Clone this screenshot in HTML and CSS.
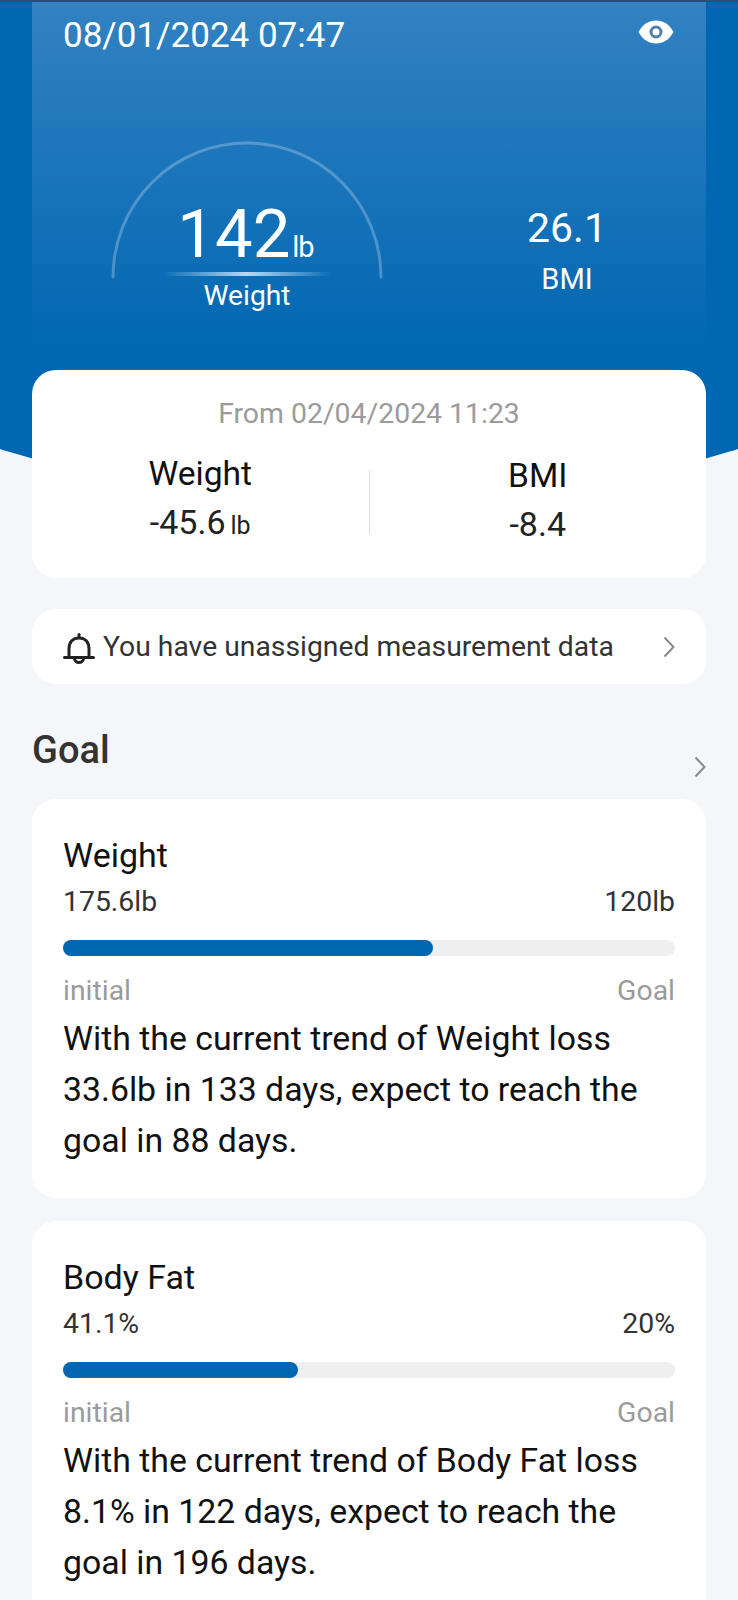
FILE: index.html
```html
<!DOCTYPE html>
<html lang="en">
<head>
  <meta charset="UTF-8">
  <meta name="viewport" content="width=device-width, initial-scale=1.0">
  <title>Weight</title>
  <link rel="stylesheet" href="styles.css">
</head>
<body>
  <div class="page">
    <section class="hero">
      <div class="hero-top">
        <span class="hero-date">08/01/2024 07:47</span>
        <svg class="eye" viewBox="0 0 36 24" width="36" height="24" aria-hidden="true">
          <path d="M0.5 12C5 4 11 0.5 18 0.5S31 4 35.500 12C31 20 25 23.500 18 23.500S5 20 0.500 12Z" fill="#fff"/>
          <circle cx="18" cy="12" r="5" fill="none" stroke="#4f7fae" stroke-width="3"/>
        </svg>
      </div>
      <div class="hero-metrics">
        <div class="gauge">
          <svg class="gauge-arc" viewBox="0 0 272 140" width="272" height="140" aria-hidden="true">
            <path d="M2 138A134 134 0 0 1 270 138" fill="none" stroke="#fff" stroke-opacity="0.25" stroke-width="3" stroke-linecap="round"/>
          </svg>
          <div class="gauge-value">142<span class="gauge-unit">lb</span></div>
          <div class="gauge-line"></div>
          <div class="gauge-label">Weight</div>
        </div>
        <div class="bmi">
          <div class="bmi-value">26.1</div>
          <div class="bmi-label">BMI</div>
        </div>
      </div>
    </section>

    <section class="card summary">
      <p class="summary-from">From 02/04/2024 11:23</p>
      <div class="summary-row">
        <div class="summary-col">
          <div class="summary-title">Weight</div>
          <div class="summary-value">-45.6<span class="summary-unit">lb</span></div>
        </div>
        <div class="summary-divider"></div>
        <div class="summary-col">
          <div class="summary-title">BMI</div>
          <div class="summary-value">-8.4</div>
        </div>
      </div>
    </section>

    <section class="card notice">
      <svg class="bell" viewBox="0 0 32 32" width="32" height="32" aria-hidden="true">
        <path d="M16 2.500V6M6 25V17C6 10 10 6 16 6S26 10 26 17V25M1.500 25.500H30.500M11.500 26C11.500 32 20.500 32 20.500 26" fill="none" stroke="#222" stroke-width="3" stroke-linecap="round"/>
      </svg>
      <span class="notice-text">You have unassigned measurement data</span>
      <svg class="chevron" viewBox="0 0 12 22" width="12" height="22" aria-hidden="true">
        <path d="M1.500 1.500L10.500 11L1.500 20.500" fill="none" stroke="#8a8a8a" stroke-width="2"/>
      </svg>
    </section>

    <div class="goal-head">
      <h2 class="goal-title">Goal</h2>
      <svg class="chevron goal-chevron" viewBox="0 0 12 22" width="12" height="22" aria-hidden="true">
        <path d="M1.500 1.500L10.500 11L1.500 20.500" fill="none" stroke="#8a8a8a" stroke-width="2"/>
      </svg>
    </div>

    <section class="card goal">
      <h3 class="goal-name">Weight</h3>
      <div class="goal-ends"><span>175.6lb</span><span>120lb</span></div>
      <div class="bar"><div class="bar-fill" style="width: 60.4%"></div></div>
      <div class="goal-ends goal-caption"><span>initial</span><span>Goal</span></div>
      <p class="goal-text">With the current trend of Weight loss<br>33.6lb in 133 days, expect to reach the<br>goal in 88 days.</p>
    </section>

    <section class="card goal">
      <h3 class="goal-name">Body Fat</h3>
      <div class="goal-ends"><span>41.1%</span><span>20%</span></div>
      <div class="bar"><div class="bar-fill" style="width: 38.4%"></div></div>
      <div class="goal-ends goal-caption"><span>initial</span><span>Goal</span></div>
      <p class="goal-text">With the current trend of Body Fat loss<br>8.1% in 122 days, expect to reach the<br>goal in 196 days.</p>
    </section>
  </div>
</body>
</html>
```

FILE: styles.css
```css
html, body {
  margin: 0;
  padding: 0;
  height: 1600px;
  overflow: hidden;
  background-color: #f4f6f9;
  font-family: Roboto, "Liberation Sans", sans-serif;
}
.page {
  position: relative;
  height: 1600px;
  padding: 0 32px;
  box-sizing: border-box;
  overflow: hidden;
  border-top: 2px solid #2b4c7c;
}
/* blue backdrop with the wide curved bottom */
.page::before {
  content: "";
  position: absolute;
  top: 0;
  left: 0;
  right: 0;
  height: 503px;
  background-color: #0167b2;
  clip-path: circle(1246px at 369px -743px);
}
.hero {
  position: relative;
  height: 368px;
  border-radius: 0 0 24px 24px;
  background: linear-gradient(#3382c2, #0167b2 94%);
  color: #fff;
}
.hero-top {
  display: flex;
  justify-content: space-between;
  align-items: center;
  padding: 12px 32px 0 31px;
}
.hero-date {
  font-size: 35px;
  line-height: 44px;
}
.eye {
  margin-top: -9px;
}
.hero-metrics {
  display: flex;
  padding: 81px 0 0 79px;
}
.gauge {
  position: relative;
  width: 272px;
  height: 180px;
  text-align: center;
}
.gauge-arc {
  position: absolute;
  top: 0;
  left: 0;
}
.gauge-value {
  padding-top: 71px;
  padding-right: 3px;
  font-size: 67px;
  line-height: 49px;
}
.gauge-unit {
  font-size: 29px;
  letter-spacing: -1px;
  margin-left: 2px;
}
.gauge-line {
  width: 168px;
  height: 4px;
  margin: 0 auto;
  background: linear-gradient(90deg, rgba(255,255,255,0), rgba(200,230,255,0.9) 50%, rgba(255,255,255,0));
}
.gauge-label {
  font-size: 28.200px;
  line-height: 40px;
}
.bmi {
  width: 186px;
  margin-left: 91px;
  padding-top: 64px;
  text-align: center;
}
.bmi-value {
  font-size: 41px;
  line-height: 50px;
}
.bmi-label {
  margin-top: 9px;
  font-size: 29px;
  line-height: 34px;
}
.card {
  position: relative;
  background-color: #fff;
  border-radius: 24px;
}
.summary {
  height: 208px;
  text-align: center;
}
.summary-from {
  margin: 0;
  padding-top: 24px;
  font-size: 28.400px;
  line-height: 40px;
  color: #9b9b9b;
}
.summary-row {
  display: flex;
  align-items: center;
  margin-top: 17px;
}
.summary-col {
  flex: 1;
}
.summary-title {
  font-size: 33.600px;
  line-height: 46px;
  color: #111;
}
.summary-value {
  margin-top: 2px;
  font-size: 34px;
  line-height: 46px;
  color: #222;
}
.summary-unit {
  margin-left: 5px;
  font-size: 25px;
}
.summary-divider {
  width: 1px;
  height: 64px;
  margin-top: 4px;
  background-color: #dcdcdc;
}
.notice {
  display: flex;
  align-items: center;
  height: 75px;
  margin-top: 31px;
  padding: 0 31px;
  box-sizing: border-box;
}
.bell {
  flex: none;
  margin-top: 2px;
}
.notice-text {
  flex: 1;
  margin-left: 8px;
  font-size: 28.300px;
  color: #333;
}
.goal-head {
  display: flex;
  justify-content: space-between;
  height: 115px;
  box-sizing: border-box;
  padding-top: 44px;
}
.goal-title {
  margin: 0;
  font-size: 38px;
  line-height: 44px;
  font-weight: 500;
  color: #333;
}
.goal-chevron {
  margin-top: 28px;
}
.goal {
  height: 399px;
  margin-bottom: 23px;
  padding: 36px 31px 0;
  box-sizing: border-box;
}
.goal-name {
  margin: 0;
  font-size: 34px;
  line-height: 40px;
  font-weight: 400;
  color: #111;
}
.goal-ends {
  display: flex;
  justify-content: space-between;
  margin-top: 7px;
  font-size: 28.400px;
  line-height: 40px;
  color: #333;
}
.bar {
  height: 16px;
  margin-top: 18px;
  border-radius: 8px;
  background-color: #efefef;
}
.bar-fill {
  height: 100%;
  border-radius: 8px;
  background-color: #0167b2;
}
.goal-caption {
  margin-top: 15px;
  color: #9b9b9b;
}
.goal-text {
  margin: 2px 0 0;
  font-size: 33.800px;
  line-height: 51px;
  color: #111;
}
```
